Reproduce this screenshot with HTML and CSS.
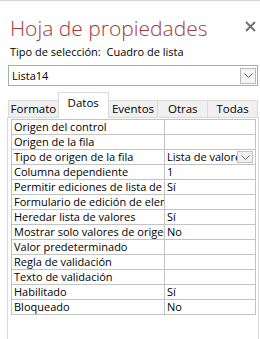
FILE: index.html
```html
<!DOCTYPE html>
<html lang="es">
<head>
  <meta charset="UTF-8" />
  <title>Hoja de propiedades</title>
  <link rel="stylesheet" href="styles.css">
</head>
<body>
  <div class="hoja">
    <div class="cabecera">
      <h1>Hoja de propiedades</h1>
      <span class="cerrar">
        <svg width="11" height="11" viewBox="0 0 11 11"><path d="M1 1L10 10M10 1L1 10" stroke="#6d6d6d" stroke-width="1.8"/></svg>
      </span>
    </div>
    <div class="tipo">Tipo de selección:&nbsp; Cuadro de lista</div>

    <div class="combo">
      <span>Lista14</span>
      <span class="flecha"><svg width="9" height="5" viewBox="0 0 9 5"><path d="M0.5 0.5L4.5 4.5L8.5 0.5" fill="none" stroke="#555" stroke-width="1"/></svg></span>
    </div>

    <div class="pestanas">
      <div class="pestana">Formato</div>
      <div class="pestana activa">Datos</div>
      <div class="pestana">Eventos</div>
      <div class="pestana">Otras</div>
      <div class="pestana">Todas</div>
    </div>

    <div class="panel">
      <table class="props">
        <tr><td>Origen del control</td><td></td></tr>
        <tr><td>Origen de la fila</td><td></td></tr>
        <tr><td>Tipo de origen de la fila</td><td><div class="celda-combo"><span>Lista de valores</span><span class="mini"><svg width="9" height="5" viewBox="0 0 9 5"><path d="M0.5 0.5L4.5 4.5L8.5 0.5" fill="none" stroke="#666" stroke-width="1"/></svg></span></div></td></tr>
        <tr><td>Columna dependiente</td><td>1</td></tr>
        <tr><td>Permitir ediciones de lista de valores</td><td>Sí</td></tr>
        <tr><td>Formulario de edición de elementos de lista</td><td></td></tr>
        <tr><td>Heredar lista de valores</td><td>Sí</td></tr>
        <tr><td>Mostrar solo valores de origen de la fila</td><td>No</td></tr>
        <tr><td>Valor predeterminado</td><td></td></tr>
        <tr><td>Regla de validación</td><td></td></tr>
        <tr><td>Texto de validación</td><td></td></tr>
        <tr><td>Habilitado</td><td>Sí</td></tr>
        <tr><td>Bloqueado</td><td>No</td></tr>
      </table>
    </div>
  </div>
</body>
</html>
```

FILE: styles.css
```css
* { box-sizing: border-box; }
html, body { height: 100%; }
body {
  margin: 0;
  background: white;
  color: #000;
  font-family: 'Open Sans', 'Noto Sans', sans-serif;
  font-size: 11px;
  overflow: hidden;
}
.hoja {
  height: 100%;
  border-top: 1px solid #d4d4d4;
  display: flex;
  flex-direction: column;
}
.cabecera {
  display: flex;
  justify-content: space-between;
  align-items: flex-start;
  padding: 13px 4px 0 10px;
}
h1 {
  margin: 0;
  font-weight: 300;
  font-size: 21px;
  line-height: 28px;
  color: #a4373a;
}
.cerrar {
  padding-top: 7px;
  line-height: 0;
}
.tipo {
  padding: 0 10px;
  margin-top: 2px;
  line-height: 16px;
}
.combo {
  margin: 5px 2px 0 8px;
  height: 21px;
  border: 1px solid #ababab;
  display: flex;
  align-items: center;
  justify-content: space-between;
  padding: 0 1px 0 3px;
}
.flecha {
  width: 16px;
  height: 16px;
  border: 1px solid #b9b9b9;
  background: #f4f4f4;
  display: flex;
  align-items: center;
  justify-content: center;
}
.pestanas {
  display: flex;
  margin: 6px 2px 0 8px;
  align-items: flex-end;
  height: 25px;
  position: relative;
  z-index: 1;
}
.pestana {
  flex: 1;
  height: 17px;
  line-height: 16px;
  text-align: center;
  background: #f0f0f0;
  border: 1px solid #d9d9d9;
  border-bottom: none;
  margin-left: -1px;
  font-size: 11.5px;
}
.pestana:first-child { margin-left: 0; }
.pestana.activa {
  height: 26px;
  line-height: 20px;
  background: white;
  margin-bottom: -1px;
}
.panel {
  flex: 1;
  margin: 0 1px 0 7px;
  border: 1px solid #d9d9d9;
  border-bottom: none;
  padding: 1px 2px 0 3px;
}
.props {
  width: 100%;
  border-collapse: collapse;
  table-layout: fixed;
}
.props td {
  border: 1px solid #c3c3c3;
  height: 15px;
  padding: 0 2px;
  line-height: 14px;
  white-space: nowrap;
  overflow: hidden;
}
.props td:first-child { width: 153px; }
.celda-combo {
  display: flex;
  justify-content: space-between;
  align-items: center;
}
.celda-combo span:first-child { overflow: hidden; }
.mini {
  flex: none;
  width: 16px;
  height: 12px;
  border: 1px solid #c3c3c3;
  background: #f0f0f0;
  display: flex;
  align-items: center;
  justify-content: center;
}
```
